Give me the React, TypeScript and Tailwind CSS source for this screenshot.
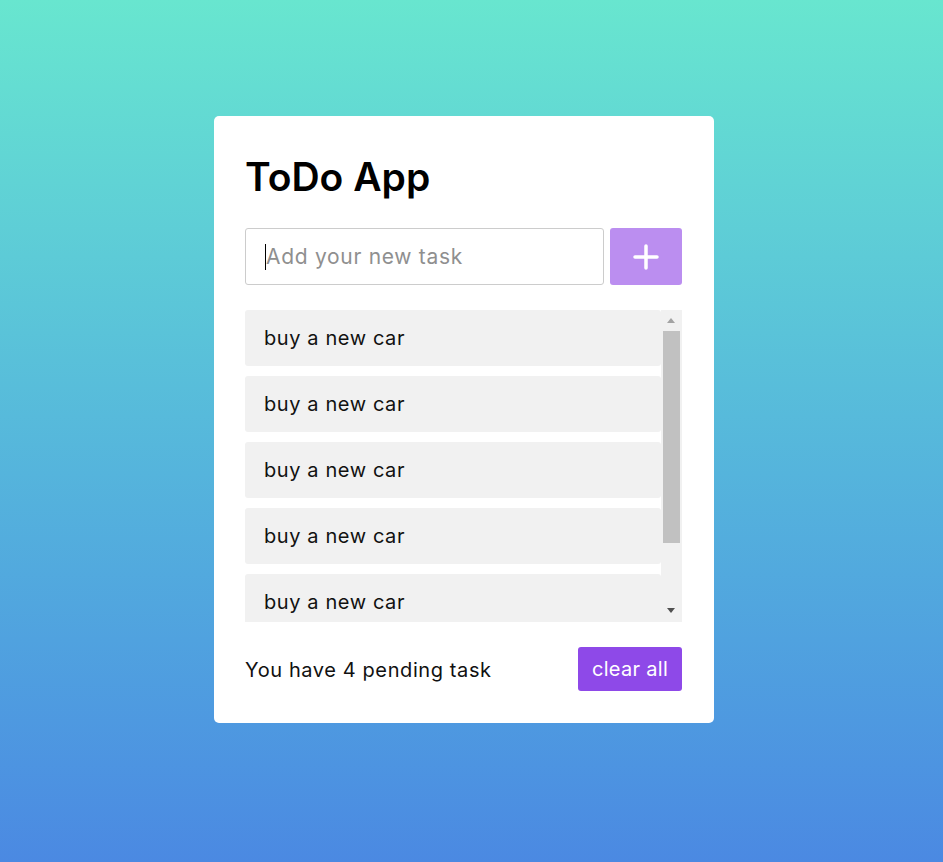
import React from "react";

const items = ["buy a new car", "buy a new car", "buy a new car", "buy a new car", "buy a new car"];

export default function App() {
  return (
    <div
      className="min-h-[862px] w-full bg-gradient-to-b from-[#68e6cf] to-[#4b89e2] pt-[116px]"
      style={{ fontFamily: "Inter, 'Noto Sans', sans-serif" }}
    >
      <div className="ml-[214px] w-[500px] rounded-[5px] bg-white pb-[32px] pl-[31px] pr-[32px] pt-[38px]">
        <h1 className="text-[39px] font-semibold leading-[46px] tracking-[0px] text-black">ToDo App</h1>
        <div className="mt-[28px] flex h-[57px] gap-[6px]">
          <div className="flex flex-1 items-center rounded-[3px] border border-[#cccccc] pl-[19px]">
            <span className="h-[26px] w-px bg-black" />
            <span className="text-[21px] tracking-[0.7px] text-[#8f8f8f]">Add your new task</span>
          </div>
          <button className="flex w-[72px] items-center justify-center rounded-[3px] bg-[#bb8ef0]">
            <svg width="26" height="26" viewBox="0 0 26 26">
              <path d="M13 2v22M2 13h22" stroke="white" strokeWidth="3.5" strokeLinecap="round" />
            </svg>
          </button>
        </div>
        <div className="mt-[25px] flex h-[312px]">
          <div className="flex flex-1 flex-col gap-[10px] overflow-hidden">
            {items.map((t, i) => (
              <div
                key={i}
                className="flex h-[56px] shrink-0 items-center rounded-[3px] bg-[#f1f1f1] pl-[19px] text-[20px] tracking-[0.6px] text-[#111]"
              >
                {t}
              </div>
            ))}
          </div>
          <div className="relative w-[21px] bg-[#f1f1f1]">
            <div className="absolute left-[6px] top-[8px] h-0 w-0 border-x-[4px] border-b-[5px] border-x-transparent border-b-[#a3a3a3]" />
            <div className="absolute left-[2px] top-[21px] h-[212px] w-[17px] bg-[#c1c1c1]" />
            <div className="absolute left-[6px] top-[298px] h-0 w-0 border-x-[4px] border-t-[5px] border-x-transparent border-t-[#505050]" />
          </div>
        </div>
        <div className="mt-[25px] flex items-center justify-between">
          <span className="translate-y-px text-[20px] tracking-[0.6px] text-[#111]">You have 4 pending task</span>
          <button className="h-[44px] w-[104px] rounded-[3px] bg-[#8e49e8] text-[20px] tracking-[0.3px] text-white">clear all</button>
        </div>
      </div>
    </div>
  );
}
